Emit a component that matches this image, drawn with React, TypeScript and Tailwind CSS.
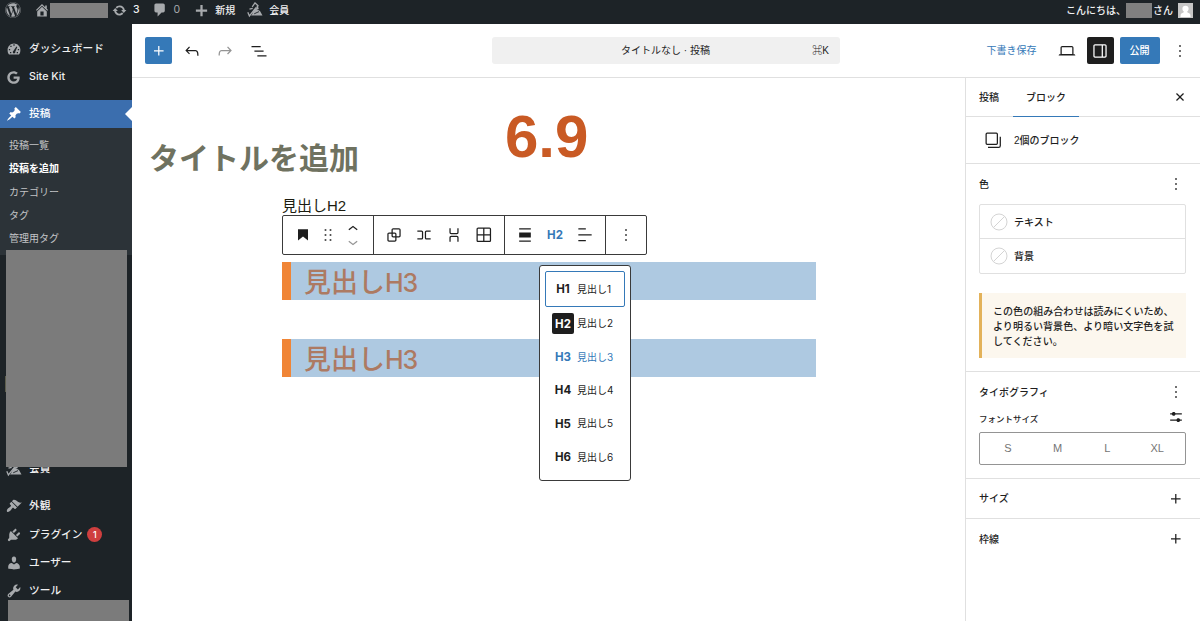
import React, { useState } from 'react';
import { FaGoogle, FaWordpress } from 'react-icons/fa';

type IconProps = {
  d: string;
  size?: string;
  box?: number;
  className?: string;
};

// editor icons are drawn on a 24 grid, admin menu icons on a 20 grid
const ICONS = {
  plus: 'M11 12.5V17.5H12.5V12.5H17.5V11H12.5V6H11V11H6V12.5H11Z',
  undo: 'M18.3 11.7c-.6-.6-1.4-.9-2.3-.9H6.7l2.9-3.3-1.1-1-4.5 5L8.5 16l1-1-2.7-2.7H16c.5 0 .9.2 1.3.5 1 1 1 3.4 1 4.5v.3h1.5v-.2c0-1.5 0-4.3-1.5-5.7z',
  redo: 'M15.6 6.5l-1.1 1 2.9 3.3H8c-.9 0-1.7.3-2.3.9-1.4 1.5-1.4 4.2-1.4 5.6v.2h1.5v-.3c0-1.1 0-3.5 1-4.5.3-.3.7-.5 1.3-.5h9.2L14.5 15l1.1 1.1 4.6-4.6-4.6-5z',
  listView: 'M3 6h11v1.5H3V6Zm3.5 5.5h11V13h-11v-1.5ZM21 17H10v1.5h11V17Z',
  desktop:
    'M20.5 16h-.7V8c0-1.1-.9-2-2-2H6.2c-1.1 0-2 .9-2 2v8h-.7c-.8 0-1.5.7-1.5 1.5h20c0-.8-.7-1.5-1.5-1.5zM5.7 8c0-.3.2-.5.5-.5h11.6c.3 0 .5.2.5.5v7.6H5.7V8z',
  drawer:
    'M18 4H6c-1.1 0-2 .9-2 2v12c0 1.1.9 2 2 2h12c1.1 0 2-.9 2-2V6c0-1.1-.9-2-2-2zm-4 14.5H6c-.3 0-.5-.2-.5-.5V6c0-.3.2-.5.5-.5h8v13zm4.5-.5c0 .3-.2.5-.5.5h-2.5v-13H18c.3 0 .5.2.5.5v12z',
  more: 'M13 19h-2v-2h2v2zm0-6h-2v-2h2v2zm0-6h-2V5h2v2z',
  close:
    'M12 13.06l3.712 3.713 1.061-1.06L13.061 12l3.712-3.712-1.06-1.06L12 10.938 8.288 7.227l-1.061 1.06L10.939 12l-3.712 3.712 1.06 1.061L12 13.061z',
  copy: 'M5 4.5h11a.5.5 0 0 1 .5.5v11a.5.5 0 0 1-.5.5H5a.5.5 0 0 1-.5-.5V5a.5.5 0 0 1 .5-.5ZM3 5a2 2 0 0 1 2-2h11a2 2 0 0 1 2 2v11a2 2 0 0 1-2 2H5a2 2 0 0 1-2-2V5Zm17 3v10.75c0 .69-.56 1.25-1.25 1.25H6v1.5h12.75a2.75 2.75 0 0 0 2.75-2.75V8H20Z',
  heading: 'M6 5V18.5911L12 13.8473L18 18.5911V5H6Z',
  drag: 'M8 7h2V5H8v2zm0 6h2v-2H8v2zm0 6h2v-2H8v2zm6-14v2h2V5h-2zm0 8h2v-2h-2v2zm0 6h2v-2h-2v2z',
  up: 'M6.5 12.4L12 8l5.5 4.4-.9 1.2L12 10l-4.5 3.6-1-1.2z',
  down: 'M17.5 11.6L12 16l-5.5-4.4.9-1.2L12 14l4.5-3.6 1 1.2z',
  group:
    'M18 4h-7c-1.1 0-2 .9-2 2v3H6c-1.1 0-2 .9-2 2v7c0 1.1.9 2 2 2h7c1.1 0 2-.9 2-2v-3h3c1.1 0 2-.9 2-2V6c0-1.1-.9-2-2-2zm-4.5 14c0 .3-.2.5-.5.5H6c-.3 0-.5-.2-.5-.5v-7c0-.3.2-.5.5-.5h3V13c0 1.1.9 2 2 2h2.5v3zm0-4.5H11c-.3 0-.5-.2-.5-.5v-2.5H13c.3 0 .5.2.5.5v2.5zm5-.5c0 .3-.2.5-.5.5h-3V11c0-1.1-.9-2-2-2h-2.5V6c0-.3.2-.5.5-.5h7c.3 0 .5.2.5.5v7z',
  row: 'M4 6.5h5a2 2 0 0 1 2 2v7a2 2 0 0 1-2 2H4V16h5a.5.5 0 0 0 .5-.5v-7A.5.5 0 0 0 9 8H4V6.5Zm16 0h-5a2 2 0 0 0-2 2v7a2 2 0 0 0 2 2h5V16h-5a.5.5 0 0 1-.5-.5v-7A.5.5 0 0 1 15 8h5V6.5Z',
  stack:
    'M17.5 4v5a2 2 0 0 1-2 2h-7a2 2 0 0 1-2-2V4H8v5a.5.5 0 0 0 .5.5h7A.5.5 0 0 0 16 9V4h1.5Zm0 16v-5a2 2 0 0 0-2-2h-7a2 2 0 0 0-2 2v5H8v-5a.5.5 0 0 1 .5-.5h7a.5.5 0 0 1 .5.5v5h1.5Z',
  grid: 'm3 5c0-1.10457.89543-2 2-2h13.5c1.1046 0 2 .89543 2 2v13.5c0 1.1046-.8954 2-2 2h-13.5c-1.10457 0-2-.8954-2-2zm2-.5h6v6.5h-6.5v-6c0-.27614.22386-.5.5-.5zm-.5 8v6c0 .2761.22386.5.5.5h6v-6.5zm8 0v6.5h6c.2761 0 .5-.2239.5-.5v-6zm0-8v6.5h6.5v-6c0-.27614-.2239-.5-.5-.5z',
  alignNone: 'M19 5.5H5V4h14v1.5ZM19 20H5v-1.5h14V20ZM5 9h14v6H5V9Z',
  alignText: 'M13 5.5H4V4h9v1.5Zm7 7H4V11h16v1.5Zm-7 7H4V18h9v1.5Z',
  settings:
    'm19 7.5h-7.628c-.3089-.87389-1.1423-1.5-2.122-1.5-.97966 0-1.81309.62611-2.12197 1.5h-2.12803v1.5h2.12803c.30888.87389 1.14231 1.5 2.12197 1.5.9797 0 1.8131-.62611 2.122-1.5h7.628zM19 15h-2.128c-.3089-.8739-1.1423-1.5-2.122-1.5s-1.8131.6261-2.122 1.5h-7.628v1.5h7.628c.3089.8739 1.1423 1.5 2.122 1.5s1.8131-.6261 2.122-1.5h2.128z',
};

const MENU_ICONS = {
  dashboard:
    'M3.76 17h12.48c1.34-1.63 1.76-3.55 1.76-6 0-4.41-3.58-8-8-8s-8 3.59-8 8c0 2.45.42 4.37 1.76 6zM9.2 4.2h1.6v1.6H9.2zM5.4 6h1.6v1.6H5.4zM13 6.8l1.1.6-2.5 6a1.6 1.6 0 1 1-2.4-.8zM3.6 10h1.6v1.6H3.6zM14.8 10h1.6v1.6h-1.6zM5 13.8h1.6v1.5H5zM13.4 13.8H15v1.5h-1.6z',
  pin: 'M10.44 3.02l1.82-1.82 6.36 6.35-1.83 1.82c-1.05-.68-2.48-.57-3.41.36l-.75.75c-.92.93-1.04 2.35-.35 3.41l-1.83 1.82-2.41-2.41-2.8 2.79c-.42.42-3.38 2.71-3.8 2.29s1.86-3.39 2.28-3.81l2.79-2.79L4.1 9.36l1.83-1.82c1.05.69 2.48.57 3.4-.36l.75-.75c.93-.92 1.05-2.35.36-3.41z',
  plugins:
    'M13.11 4.36L9.87 7.6 8 5.73l3.24-3.24c.35-.34 1.05-.2 1.56.32.52.51.66 1.21.31 1.55zm-8 1.77l.91-1.12 9.01 9.01-1.19.84c-.71.71-2.63 1.16-3.82 1.16H6.14L4.9 17.26c-.59.59-1.54.59-2.12 0-.59-.58-.59-1.53 0-2.12l1.24-1.24v-3.88c0-1.13.4-3.19 1.09-3.89zm7.26 3.97l3.24-3.24c.34-.35 1.04-.21 1.55.31.52.51.66 1.21.31 1.55l-3.24 3.25z',
  users:
    'M10 9.25c-2.27 0-2.73-3.44-2.73-3.44C7 4.02 7.82 2 9.97 2c2.16 0 2.98 2.02 2.71 3.81 0 0-.41 3.44-2.68 3.44zm0 2.57L12.72 10c2.39 0 4.52 2.33 4.52 4.53v2.49s-3.65 1.13-7.24 1.13c-3.65 0-7.24-1.13-7.24-1.13v-2.49c0-2.25 1.94-4.48 4.47-4.48z',
  tools:
    'M16.68 9.77c-1.34 1.34-3.3 1.67-4.95.99l-5.41 6.52c-.99.99-2.59.99-3.58 0s-.99-2.59 0-3.57l6.52-5.42c-.68-1.65-.35-3.61.99-4.95 1.28-1.28 3.12-1.62 4.72-1.06l-2.89 2.89 2.82 2.82 2.86-2.87c.53 1.58.18 3.39-1.08 4.65zM3.81 16.21c.4.39 1.04.39 1.43 0 .4-.4.4-1.04 0-1.43-.39-.4-1.03-.4-1.43 0-.39.39-.39 1.03 0 1.43z',
  appearance:
    'M14.48 11.06L7.41 3.99l1.5-1.5c.5-.56 2.3-.47 3.51.32 1.21.8 1.43 1.28 2.91 2.1 1.18.64 2.45 1.26 4.45.85zm-.71.71L6.7 4.7 4.93 6.47c-.39.39-.39 1.02 0 1.41l1.06 1.06c.39.39.39 1.03 0 1.42-.6.6-1.43 1.11-2.21 1.69-.35.26-.7.53-1.01.84C1.43 14.23.4 16.08 1.4 17.07c.99 1 2.84-.03 4.18-1.36.31-.31.58-.66.85-1.02.57-.78 1.08-1.61 1.69-2.21.39-.39 1.02-.39 1.41 0l1.06 1.06c.39.39 1.02.39 1.41 0z',
  home: 'M16 8.5l1.53 1.53-1.06 1.06L10 4.6l-6.47 6.49-1.06-1.06L10 2.5l4 4v-2h2v4zm-6-2.46l6 5.99V18H4v-5.97zM12 17v-5H8v5h4z',
  update:
    'M10.2 3.28c3.53 0 6.43 2.61 6.92 6h2.08l-3.5 4-3.5-4h2.32c-.45-1.97-2.21-3.45-4.32-3.45-1.45 0-2.73.71-3.54 1.78L4.95 5.66C6.23 4.2 8.11 3.28 10.2 3.28zm-.4 13.44c-3.52 0-6.43-2.61-6.92-6H.8l3.5-4c1.17 1.33 2.33 2.67 3.5 4H5.48c.45 1.97 2.21 3.45 4.32 3.45 1.45 0 2.73-.71 3.54-1.78l1.71 1.95c-1.28 1.46-3.15 2.38-5.25 2.38z',
  comment:
    'M5 2h9c1.1 0 2 .9 2 2v7c0 1.1-.9 2-2 2h-2l-5 5v-5H5c-1.1 0-2-.9-2-2V4c0-1.1.9-2 2-2z',
  add: 'M17.5 8.5v3h-6v6h-3v-6h-6v-3h6v-6h3v6z',
};

const SUB_MENU = ['投稿一覧', '投稿を追加', 'カテゴリー', 'タグ', '管理用タグ'];

const LEVELS = [1, 2, 3, 4, 5, 6];

function Icon({ d, size = 'size-5', box = 24, className = '' }: IconProps) {
  return (
    <svg
      viewBox={`0 0 ${box} ${box}`}
      className={`${size} shrink-0 fill-current ${className}`}
    >
      <path fillRule="evenodd" d={d} />
    </svg>
  );
}

function MemberIcon() {
  return (
    <svg viewBox="0 0 16 16" className="size-4 shrink-0 fill-[#a7aaad]">
      <path d="M5 12.5 7 7.5l2-.8 4 2.3 2.5 4.5H4z" />
      <path
        d="M.8 10.2 2.4 14 9.2 5.4M5.2 4.8 8 .9l3 2.7-1.4 3.3M2.5 7.2l3.2-.8M10 3.5l1.2 3.7"
        fill="none"
        stroke="#a7aaad"
        strokeWidth="1.3"
      />
      <path d="M7.2 11.8 12 9.6" stroke="#1d2327" strokeWidth=".9" />
    </svg>
  );
}

function AdminBar() {
  return (
    <header className="flex h-[24px] shrink-0 items-center bg-[#1d2327] pb-[4px] text-[10px] font-medium text-[#f0f0f1]">
      <FaWordpress className="ml-[5px] size-[16px] shrink-0 text-[#a7aaad]" />
      <Icon
        d={MENU_ICONS.home}
        box={20}
        size="size-4"
        className="ml-[13px] text-[#a7aaad]"
      />
      <div className="h-[15px] w-[58px] bg-[#808080]" />
      <Icon
        d={MENU_ICONS.update}
        box={20}
        size="size-[15px]"
        className="ml-[4px] text-[#a7aaad]"
      />
      <span className="ml-[6px] font-['Inter'] text-[10.5px]">3</span>
      <Icon
        d={MENU_ICONS.comment}
        box={20}
        size="size-[16px]"
        className="ml-[12px] text-[#a7aaad]"
      />
      <span className="ml-[6px] font-['Inter'] text-[10.5px] font-normal text-[#a7aaad]">
        0
      </span>
      <Icon
        d={MENU_ICONS.add}
        box={20}
        size="size-[15px]"
        className="ml-[14px] text-[#a7aaad]"
      />
      <span className="ml-[6px]">新規</span>
      <div className="ml-3">
        <MemberIcon />
      </div>
      <span className="ml-[6px]">会員</span>
      <div className="ml-auto flex items-center pr-[7px]">
        <span className="w-[60px]">こんにちは、</span>
        <div className="h-[15px] w-[26px] bg-[#808080]" />
        <span className="ml-px">さん</span>
        <svg viewBox="0 0 15 15" className="ml-[5px] size-[15px] bg-[#c6c6c6]">
          <circle cx="7.5" cy="5.8" r="3.1" fill="#fff" />
          <path
            d="M2.5 14v-1c0-2 1.4-3 3-3.4L6 8h3l.5 1.6c1.6.4 3 1.4 3 3.4v1z"
            fill="#fff"
          />
        </svg>
      </div>
    </header>
  );
}

function MenuItem({
  icon,
  label,
  badge,
}: {
  icon: React.ReactNode;
  label: string;
  badge?: number;
}) {
  return (
    <div className="flex h-[28.3px] shrink-0 items-center pl-[6px] text-[#f0f0f1]">
      <span className="flex w-4 justify-center text-[#a7aaad]">{icon}</span>
      <span className="ml-[7px]">{label}</span>
      {badge && (
        <span className="ml-[5px] flex size-[15px] items-center justify-center rounded-full bg-[#cf3f3f] font-['Inter'] text-[9px] text-white">
          {badge}
        </span>
      )}
    </div>
  );
}

function menuIcon(d: string) {
  return <Icon d={d} box={20} size="size-4" />;
}

function AdminMenu() {
  return (
    <nav className="relative flex w-[132px] shrink-0 flex-col overflow-hidden bg-[#1d2327] pt-[10.6px] font-['Inter','Noto_Sans_CJK_JP',sans-serif] text-[10.7px] font-medium">
      <MenuItem icon={menuIcon(MENU_ICONS.dashboard)} label="ダッシュボード" />
      <MenuItem
        icon={<FaGoogle className="size-[13px] -translate-x-px" />}
        label="Site Kit"
      />
      <div className="relative mt-[8.8px] flex h-[28px] shrink-0 items-center bg-[#3b6eae] pl-[6px] text-white">
        {menuIcon(MENU_ICONS.pin)}
        <span className="ml-[7px] pt-px">投稿</span>
        <div className="absolute right-0 h-0 w-0 border-y-[7px] border-r-[7px] border-y-transparent border-r-white" />
      </div>
      <ul className="h-[127px] shrink-0 bg-[#2c3338] pt-[6px] pl-[9px] text-[10px]">
        {SUB_MENU.map((item) => (
          <li
            key={item}
            className={`flex h-[23.3px] items-center ${
              item === '投稿を追加'
                ? 'font-bold text-white'
                : 'font-normal text-[#c3c4c7]'
            }`}
          >
            {item}
          </li>
        ))}
      </ul>
      <div className="mt-[200px]">
        <MenuItem icon={<MemberIcon />} label="会員" />
      </div>
      <div className="mt-[9px]">
        <MenuItem icon={menuIcon(MENU_ICONS.appearance)} label="外観" />
        <MenuItem
          icon={menuIcon(MENU_ICONS.plugins)}
          label="プラグイン"
          badge={1}
        />
        <MenuItem icon={menuIcon(MENU_ICONS.users)} label="ユーザー" />
        <MenuItem icon={menuIcon(MENU_ICONS.tools)} label="ツール" />
      </div>
      {/* masked menu entries */}
      <div className="absolute top-[352px] left-[5px] h-[16px] w-px bg-[#5c5d4c]" />
      <div className="absolute top-[226px] left-[6px] h-[217px] w-[121px] bg-[#7b7b7b]" />
      <div className="absolute top-[576px] left-[8px] h-[21px] w-[121px] bg-[#7b7b7b]" />
    </nav>
  );
}

function EditorHeader() {
  return (
    <div className="flex h-[54px] shrink-0 items-center border-b border-[#e0e0e0] pl-[13px] text-[10px] font-medium text-[#1e1e1e]">
      <div className="flex size-[27px] items-center justify-center rounded-[2px] bg-[#3579b8] text-white">
        <Icon d={ICONS.plus} />
      </div>
      <Icon d={ICONS.undo} className="ml-[10px]" />
      <Icon d={ICONS.redo} className="ml-[13px] text-[#949494]" />
      <Icon d={ICONS.listView} className="ml-[14px]" />
      <div className="ml-[223px] flex h-[27px] w-[348px] items-center rounded-[3px] bg-[#f0f0f0]">
        <span className="ml-[129px] font-normal whitespace-nowrap">
          タイトルなし · 投稿
        </span>
        <span className="mr-[11px] ml-auto">⌘K</span>
      </div>
      <div className="ml-auto flex items-center pr-[10.5px]">
        <span className="font-normal text-[#3579b8]">下書き保存</span>
        <Icon d={ICONS.desktop} className="ml-[20px]" />
        <div className="ml-[10px] flex size-[27px] items-center justify-center rounded-[2px] bg-[#1e1e1e] text-white">
          <Icon d={ICONS.drawer} />
        </div>
        <div className="ml-[6px] flex h-[27px] w-[40px] items-center justify-center rounded-[2px] bg-[#3579b8] text-white">
          公開
        </div>
        <Icon d={ICONS.more} className="ml-[10px]" />
      </div>
    </div>
  );
}

function BlockToolbar() {
  return (
    <div className="flex h-[40px] w-[365px] rounded-[2px] border border-[#3a3a3a] bg-white text-[#1e1e1e]">
      <div className="flex w-[91px] items-center border-r border-[#3a3a3a] pl-[10px]">
        <Icon d={ICONS.heading} />
        <Icon d={ICONS.drag} className="ml-[5px]" />
        <div className="ml-[5px] flex flex-col">
          <Icon d={ICONS.up} className="-mb-[7px]" />
          <Icon d={ICONS.down} className="text-[#949494]" />
        </div>
      </div>
      <div className="flex w-[131px] items-center gap-[10px] border-r border-[#3a3a3a] pl-[10px]">
        <Icon d={ICONS.group} />
        <Icon d={ICONS.row} />
        <Icon d={ICONS.stack} />
        <Icon d={ICONS.grid} />
      </div>
      <div className="flex w-[101px] items-center border-r border-[#3a3a3a] pl-[10px]">
        <Icon d={ICONS.alignNone} />
        <span className="w-10 pt-px text-center font-['Inter'] text-[11.5px] font-bold text-[#3579b8]">
          H2
        </span>
        <Icon d={ICONS.alignText} />
      </div>
      <div className="flex flex-1 items-center justify-center">
        <Icon d={ICONS.more} />
      </div>
    </div>
  );
}

function LevelMenu({
  focused,
  onSelect,
}: {
  focused: number;
  onSelect: (level: number) => void;
}) {
  return (
    <div className="absolute top-[187px] left-[407px] h-[216px] w-[92px] rounded-[3px] border border-[#3a3a3a] bg-white px-[5px] pt-[5px] text-[10px] text-[#1e1e1e]">
      {LEVELS.map((level) => (
        <button
          key={level}
          type="button"
          onClick={() => onSelect(level)}
          className={`flex w-full items-center rounded-[2px] border pl-[6px] font-['Inter','Noto_Sans_CJK_JP',sans-serif] whitespace-nowrap ${
            level === focused
              ? 'h-[36px] border-[#3579b8]'
              : 'h-[33.4px] border-transparent'
          } ${level === 3 ? 'text-[#3579b8]' : ''}`}
        >
          <span
            className={`flex h-[21px] w-[22px] items-center justify-center rounded-[2px] pt-px text-[11.5px] font-bold ${
              level === 2 ? 'bg-[#1e1e1e] text-white' : ''
            }`}
          >
            H{level}
          </span>
          <span className="ml-[3px]">見出し{level}</span>
        </button>
      ))}
    </div>
  );
}

function HeadingBlock() {
  return (
    <h3 className="flex h-[38px] w-[534px] items-center border-l-[9px] border-[#f08536] bg-[#aec9e1] pt-[5px] pl-[13px] text-[27px] font-medium text-[#ad7a62]">
      見出し
      <span className="font-['Inter'] text-[25px] tracking-[-1.2px]">H3</span>
    </h3>
  );
}

function Canvas() {
  const [focused, setFocused] = useState<number>(1);
  return (
    <main className="relative flex-1 bg-white">
      <div className="flex items-start pl-[17px]">
        <h1 className="mt-[59px] w-[356px] text-[30px] leading-[44px] font-bold text-[#6f7260]">
          タイトルを追加
        </h1>
        <span className="mt-[26px] text-[60px] leading-[65px] font-bold text-[#c95a24]">
          6.9
        </span>
      </div>
      <div className="pl-[150px]">
        <p className="mt-[15px] h-[19px] text-[15px] leading-[20px] text-[#1c1c10]">
          見出しH2
        </p>
        <BlockToolbar />
        <div className="mt-[7px] flex flex-col gap-[39px]">
          <HeadingBlock />
          <HeadingBlock />
        </div>
      </div>
      <LevelMenu focused={focused} onSelect={setFocused} />
    </main>
  );
}

function NoColor() {
  return (
    <svg viewBox="0 0 18 18" className="size-[18px] fill-none stroke-[#d4d4d4]">
      <circle cx="9" cy="9" r="8" />
      <path d="M3.5 14.5l11-11" />
    </svg>
  );
}

function SettingsPanel() {
  return (
    <aside className="flex w-[235px] shrink-0 flex-col border-l border-[#e0e0e0] bg-white text-[10px] font-medium text-[#1e1e1e]">
      <div className="flex h-[39px] shrink-0 border-b border-[#e0e0e0] pl-[13px]">
        <span className="flex items-center">投稿</span>
        <span className="ml-[14px] flex h-[39px] w-[66px] items-center justify-center border-b-[1.5px] border-[#3579b8]">
          ブロック
        </span>
        <Icon d={ICONS.close} className="mt-[9px] mr-[10.5px] ml-auto" />
      </div>
      <div className="flex h-[47px] shrink-0 items-center border-b border-[#e0e0e0] pl-[17px]">
        <Icon d={ICONS.copy} />
        <span className="ml-[11px] pt-px">2個のブロック</span>
      </div>
      <section className="h-[208px] shrink-0 border-b border-[#e0e0e0] pr-[14px] pl-[13px]">
        <div className="flex h-[40px] items-center justify-between">
          <span>色</span>
          <Icon d={ICONS.more} />
        </div>
        <div className="rounded-[2px] border border-[#e0e0e0]">
          <div className="flex h-[34px] items-center border-b border-[#e0e0e0] pl-[10px]">
            <NoColor />
            <span className="ml-[6px] pt-px">テキスト</span>
          </div>
          <div className="flex h-[34px] items-center pl-[10px]">
            <NoColor />
            <span className="ml-[6px]">背景</span>
          </div>
        </div>
        <p className="mt-[19px] border-l-[3px] border-[#e3b25a] bg-[#fcf7ee] pt-[11px] pb-[9px] pl-[11px] text-[10.05px] leading-[15px]">
          この色の組み合わせは読みにくいため、
          <br />
          より明るい背景色、より暗い文字色を試
          <br />
          してください。
        </p>
      </section>
      <section className="h-[107px] shrink-0 border-b border-[#e0e0e0] pr-[14px] pl-[13px]">
        <div className="flex h-[40px] items-center justify-between">
          <span>タイポグラフィ</span>
          <Icon d={ICONS.more} />
        </div>
        <div className="flex h-[20px] items-start justify-between text-[8.5px] leading-[14px]">
          <span>フォントサイズ</span>
          <Icon d={ICONS.settings} className="-mt-[5px]" />
        </div>
        <div className="grid h-[33px] grid-cols-4 items-center rounded-[2px] border border-[#949494] px-[3px] text-center text-[11px] font-normal text-[#757575]">
          <span>S</span>
          <span>M</span>
          <span>L</span>
          <span>XL</span>
        </div>
      </section>
      {['サイズ', '枠線'].map((label) => (
        <section
          key={label}
          className="flex h-[40px] shrink-0 items-center justify-between border-b border-[#e0e0e0] pr-[14px] pl-[13px] last:border-b-0"
        >
          <span>{label}</span>
          <Icon d={ICONS.plus} />
        </section>
      ))}
    </aside>
  );
}

function App() {
  return (
    <div className="flex h-[621px] w-[1200px] flex-col overflow-hidden bg-white font-['Liberation_Sans','Noto_Sans_CJK_JP',sans-serif]">
      <AdminBar />
      <div className="flex min-h-0 flex-1">
        <AdminMenu />
        <div className="flex min-w-0 flex-1 flex-col">
          <EditorHeader />
          <div className="flex min-h-0 flex-1">
            <Canvas />
            <SettingsPanel />
          </div>
        </div>
      </div>
    </div>
  );
}

export default App;
